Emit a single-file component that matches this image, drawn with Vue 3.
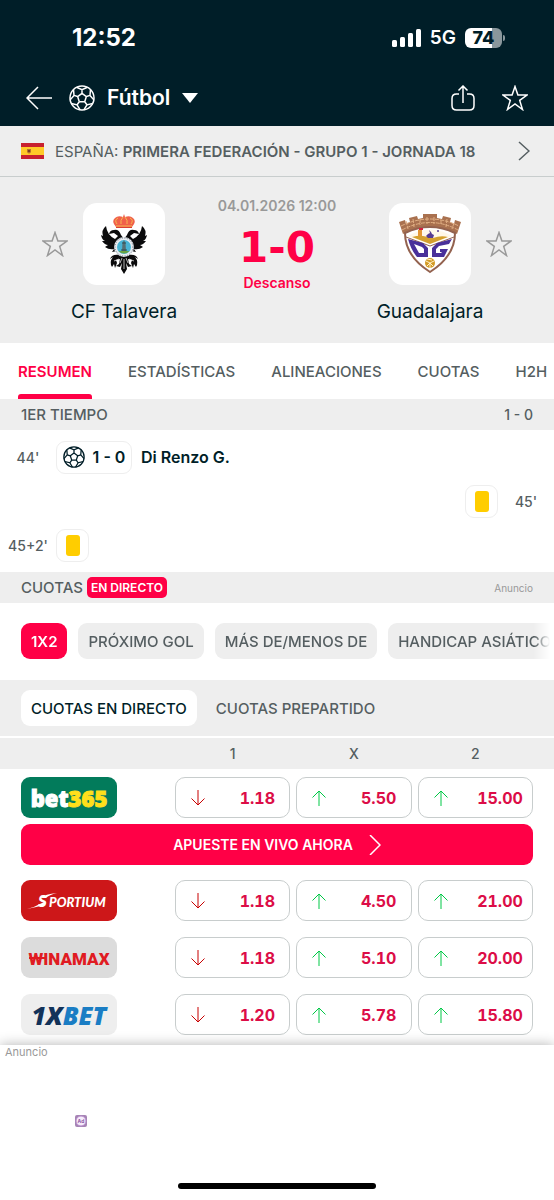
<script setup>
import { ref } from 'vue';

const tabs = ['RESUMEN', 'ESTADÍSTICAS', 'ALINEACIONES', 'CUOTAS', 'H2H'];
const activeTab = ref('RESUMEN');

const markets = ['1X2', 'PRÓXIMO GOL', 'MÁS DE/MENOS DE', 'HANDICAP ASIÁTICO'];
const activeMarket = ref('1X2');

const oddsTypes = ['CUOTAS EN DIRECTO', 'CUOTAS PREPARTIDO'];
const activeOddsType = ref('CUOTAS EN DIRECTO');

const bookmakers = [
  { id: 'bet365', odds: ['1.18', '5.50', '15.00'], cta: true },
  { id: 'sportium', odds: ['1.18', '4.50', '21.00'] },
  { id: 'winamax', odds: ['1.18', '5.10', '20.00'] },
  { id: '1xbet', odds: ['1.20', '5.78', '15.80'] },
];

// Builds the seams of the football: central pentagon, spokes and outer patches
const polar = (r, deg) => {
  const a = (deg * Math.PI) / 180;
  return `${(13 + r * Math.cos(a)).toFixed(2)} ${(13 + r * Math.sin(a)).toFixed(2)}`;
};
const ballPath = [0, 1, 2, 3, 4].map((k) => {
  const a = -90 + k * 72;
  return `M${polar(4.6, a)}L${polar(4.6, a + 72)}`
    + `M${polar(4.6, a)}L${polar(8.4, a)}`
    + `M${polar(12, a - 27)}L${polar(8.4, a)}L${polar(12, a + 27)}`;
}).join('');
</script>

<template>
  <div class="page">
    <header class="top">
      <div class="status">
        <span class="clock">12:52</span>
        <div class="status-right">
          <svg class="signal" viewBox="0 0 29 18" aria-hidden="true">
            <rect x="0" y="11" width="5" height="7" rx="1.5" />
            <rect x="8" y="8" width="5" height="10" rx="1.5" />
            <rect x="16" y="4" width="5" height="14" rx="1.5" />
            <rect x="24" y="0" width="5" height="18" rx="1.5" />
          </svg>
          <span class="network">5G</span>
          <span class="battery"><span class="battery-level">74</span></span>
        </div>
      </div>
      <div class="toolbar">
        <button class="icon-btn" aria-label="Volver">
          <svg width="26" height="24" viewBox="0 0 26 24" class="line"><path d="M26 12H1M12 1L1 12L12 23" /></svg>
        </button>
        <button class="sport">
          <svg width="26" height="26" viewBox="0 0 26 26" class="line"><circle cx="13" cy="13" r="12" /><path :d="ballPath" /></svg>
          <span>Fútbol</span>
          <svg width="16" height="10" viewBox="0 0 16 10"><path d="M0 0H16L8 10Z" fill="currentColor" /></svg>
        </button>
        <div class="actions">
          <button class="icon-btn" aria-label="Compartir">
            <svg width="24" height="26" viewBox="0 0 24 26" class="line"><path d="M8 9H5.500Q1 9 1 13.500V20.500Q1 25 5.500 25H18.500Q23 25 23 20.500V13.500Q23 9 18.500 9H16M12 18V1M7.500 5.500L12 1L16.500 5.500" /></svg>
          </button>
          <button class="icon-btn" aria-label="Favorito">
            <svg width="26" height="26" viewBox="0 0 26 26" class="line"><path d="M13 1.500L15.900 9.900L25 10L17.700 15.400L20.500 24.500L13 19L5.500 24.500L8.300 15.400L1 10L10.100 9.900Z" /></svg>
          </button>
        </div>
      </div>
    </header>

    <a class="league" href="#">
      <svg class="flag" width="23" height="16" viewBox="0 0 23 16" aria-hidden="true">
        <rect width="23" height="16" fill="#c8202f" />
        <rect y="4" width="23" height="8" fill="#ffc928" />
        <path d="M6 6H10V9Q8 12 6 9Z" fill="#b5722b" /><path d="M7 7H9V9H7Z" fill="#7a3b20" />
      </svg>
      <span class="league-name">ESPAÑA: <b>PRIMERA FEDERACIÓN - GRUPO 1 - JORNADA 18</b></span>
      <svg class="line" width="12" height="20" viewBox="0 0 12 20"><path d="M1 1L11 10L1 19" /></svg>
    </a>

    <section class="match">
      <div class="team">
        <div class="team-top">
          <button class="icon-btn fav" aria-label="Seguir a CF Talavera">
            <svg width="26" height="26" viewBox="0 0 26 26" class="line"><path d="M13 1.500L15.900 9.900L25 10L17.700 15.400L20.500 24.500L13 19L5.500 24.500L8.300 15.400L1 10L10.100 9.900Z" /></svg>
          </button>
          <div class="crest">
            <svg width="48" height="60" viewBox="0 0 48 60">
              <g fill="#0b0b0c">
                <path d="M6 12Q1 16 3 22L1 21Q2 26 5 27L2 27Q5 31 8 31L5 33Q9 36 14 35L12 38L17 37L18 42H30L31 37L36 38L34 35Q39 36 43 33L40 31Q43 31 46 27L43 27Q46 26 47 21L45 22Q47 16 42 12Q41 21 33 25L30 22L34 19L39 20Q38 16 34 16Q29 15 27 21L24 25L21 21Q19 15 14 16Q10 16 9 20L14 19L18 22L15 25Q7 21 6 12Z" />
                <path d="M19 41Q12 40 10 45L13 43Q9 48 12 53L14 50L15 54L17 49L16 46L20 45L19 50L16 52L20 53L22 49L21 55L24 60L27 55L26 49L28 53L32 52L29 50L28 45L32 46L31 49L33 54L34 50L36 53Q39 48 35 43L38 45Q36 40 29 41Z" />
              </g>
              <path d="M19 45L14 47M29 45L34 47M22 44L20 49M26 44L28 49M24 45V55" stroke="#fff" stroke-width="0.700" />
              <circle cx="24" cy="33" r="10" fill="#e9edf2" />
              <circle cx="24" cy="33" r="9" fill="none" stroke="#66707a" stroke-width="1" stroke-dasharray="1 1.500" />
              <circle cx="24" cy="33" r="7" fill="#48b4d4" />
              <path d="M18.500 37H29.500Q24 42 18.500 37Z" fill="#69a443" />
              <path d="M22 37L22.500 29L24 26L25.500 29L26 37Z" fill="#566f72" />
              <path d="M22 29H26M21 36H27" stroke="#2a4f56" />
              <path d="M16 13Q11 7 15 4Q18 1 23 3L24 0L25 3Q30 1 33 4Q37 7 32 13Z" fill="#f0604a" />
              <path d="M16 12H32M17 10Q14 6 18 4M31 10Q34 6 30 4M21 10Q20 6 23 3M27 10Q28 6 25 3" fill="none" stroke="#f6b74f" />
              <path d="M16 13.500H32" stroke="#d93e32" />
            </svg>
          </div>
        </div>
        <a class="team-name" href="#">CF Talavera</a>
      </div>

      <div class="result">
        <span class="date">04.01.2026 12:00</span>
        <strong class="score">1-0</strong>
        <span class="stage">Descanso</span>
      </div>

      <div class="team away">
        <div class="team-top">
          <div class="crest">
            <svg width="62" height="60" viewBox="0 0 62 60">
              <path d="M0 8L6 6L7 10L11 8L10 4L18 2L19 5L24 4V0H38V4L43 5L44 2L52 4L51 8L55 10L56 6L62 8L58 20Q31 6 4 20Z" fill="#a9714f" />
              <path d="M2 12Q31 -2 60 12M3 16Q31 1 59 16M7 7L9 15M14 5L15 13M21 5V11M28 3V10M35 3V10M42 6V11M48 5L47 13M55 9L53 15" fill="none" stroke="#e0ae83" stroke-width="1" stroke-dasharray="4 1" />
              <path d="M6 19Q31 7 56 19Q56 42 31 58Q6 42 6 19Z" fill="#fff" stroke="#93624f" stroke-width="2" />
              <path d="M9 22Q31 9 53 22L31 30Z" fill="#fff8e9" />
              <path d="M13 23Q20 21 24 22L34 24Q42 21 49 23L31 30Z" fill="#d5a02e" />
              <path d="M19 22V16H23V22Z" fill="#e49635" /><path d="M20 14H24V16H20Z" fill="#d3233c" />
              <path d="M27 22L29 20L31 19L30 16L32 18L33 20L35 21L34 24H29Z" fill="#563b91" />
              <circle cx="39" cy="17" r="1" fill="#563b91" />
              <path d="M7 23L31 32L55 23" fill="none" stroke="#93624f" />
              <path d="M9 25L24 29L29 34V43H18Q12 36 9 25ZM15 30L20 39H25V35L23 33Z" fill="#49309a" fill-rule="evenodd" />
              <path d="M53 25L38 29L33 34V43H45L49 35H41V38H43L42 39H37V35L40 32L50 30Z" fill="#49309a" />
              <circle cx="31" cy="49" r="5" fill="#d39b27" />
              <path d="M27 47L31 49L35 47M31 49V54M28 45L33 46M28 52L31 49L34 52" fill="none" stroke="#fff1c8" stroke-width="1" />
            </svg>
          </div>
          <button class="icon-btn fav" aria-label="Seguir a Guadalajara">
            <svg width="26" height="26" viewBox="0 0 26 26" class="line"><path d="M13 1.500L15.900 9.900L25 10L17.700 15.400L20.500 24.500L13 19L5.500 24.500L8.300 15.400L1 10L10.100 9.900Z" /></svg>
          </button>
        </div>
        <a class="team-name" href="#">Guadalajara</a>
      </div>
    </section>

    <nav class="tabs">
      <button
        v-for="tab in tabs"
        :key="tab"
        class="tab"
        :class="{ active: tab === activeTab }"
        @click="activeTab = tab"
      >{{ tab }}</button>
    </nav>

    <section>
      <h2 class="section-head"><span>1ER TIEMPO</span><span class="partial">1 - 0</span></h2>
      <ul class="events">
        <li class="event">
          <span class="minute">44'</span>
          <span class="incident goal">
            <svg width="22" height="22" viewBox="0 0 26 26" class="line"><circle cx="13" cy="13" r="12" /><path :d="ballPath" /></svg>
            <b>1 - 0</b>
          </span>
          <a class="player" href="#">Di Renzo G.</a>
        </li>
        <li class="event right">
          <span class="minute">45'</span>
          <span class="incident"><i class="card"></i></span>
        </li>
        <li class="event">
          <span class="minute">45+2'</span>
          <span class="incident"><i class="card"></i></span>
        </li>
      </ul>
    </section>

    <section>
      <h2 class="section-head">
        <span class="odds-title">CUOTAS <span class="live">EN DIRECTO</span></span>
        <small>Anuncio</small>
      </h2>
      <div class="markets">
        <button
          v-for="market in markets"
          :key="market"
          class="chip"
          :class="{ active: market === activeMarket }"
          @click="activeMarket = market"
        >{{ market }}</button>
      </div>
      <div class="odds-types">
        <button
          v-for="type in oddsTypes"
          :key="type"
          class="type"
          :class="{ active: type === activeOddsType }"
          @click="activeOddsType = type"
        >{{ type }}</button>
      </div>

      <table class="odds">
        <thead>
          <tr><td></td><th scope="col">1</th><th scope="col">X</th><th scope="col">2</th></tr>
        </thead>
        <tbody>
          <template v-for="book in bookmakers" :key="book.id">
            <tr>
              <td>
                <a class="logo" :class="'logo-' + book.id" href="#">
                  <span v-if="book.id === 'bet365'">bet<em>365</em></span>
                  <svg v-else-if="book.id === 'sportium'" width="96" height="40" viewBox="0 0 96 40">
                    <path d="M6 28Q14 26 21 22L24 21L23 24Q16 26 6 28ZM20 17Q24 13 36 12Q28 14 25 17Z" fill="#fff" />
                    <text x="17" y="26" class="sportium-s">S</text>
                    <text x="28" y="26" class="sportium-text">PORTIUM</text>
                  </svg>
                  <svg v-else-if="book.id === 'winamax'" width="96" height="40" viewBox="0 0 96 40">
                    <text x="48" y="27" text-anchor="middle" class="winamax-text">WINAMAX</text>
                    <path d="M8 20H25" stroke="#e01b22" stroke-width="2" />
                  </svg>
                  <span v-else><em>1X</em>BET</span>
                </a>
              </td>
              <td v-for="(odd, i) in book.odds" :key="i">
                <button class="odd">
                  <svg v-if="i === 0" class="line down" width="14" height="16" viewBox="0 0 14 16"><path d="M7 0V15M0.500 8.500L7 15L13.500 8.500" /></svg>
                  <svg v-else class="line up" width="14" height="16" viewBox="0 0 14 16"><path d="M7 16V1M0.500 7.500L7 1L13.500 7.500" /></svg>
                  <span>{{ odd }}</span>
                </button>
              </td>
            </tr>
            <tr v-if="book.cta" class="cta-row">
              <td colspan="4">
                <button class="cta">
                  APUESTE EN VIVO AHORA
                  <svg class="line" width="12" height="20" viewBox="0 0 12 20"><path d="M1 0L11 10L1 20" /></svg>
                </button>
              </td>
            </tr>
          </template>
        </tbody>
      </table>
    </section>

    <aside class="ad">
      <span class="ad-label">Anuncio</span>
      <svg class="ad-mark" width="14" height="14" viewBox="0 0 14 14">
        <rect x="1" y="1" width="12" height="12" rx="2" fill="#a584b4" />
        <circle cx="7" cy="7" r="5" fill="#f6ecfb" stroke="#b78bca" />
        <text x="7" y="9" text-anchor="middle" class="ad-text">Ad</text>
      </svg>
      <div class="home-bar"></div>
    </aside>
  </div>
</template>

<style>
body {
  margin: 0;
  background: #fff;
}
</style>

<style scoped>
.page {
  display: flex;
  flex-direction: column;
  min-height: 100vh;
  overflow: hidden;
  font-family: Inter, Roboto, sans-serif;
  font-size: 14px;
  color: #001e28;
}

.page * {
  box-sizing: border-box;
}

button {
  padding: 0;
  border: none;
  background: none;
  font: inherit;
  color: inherit;
  white-space: nowrap;
  cursor: pointer;
}

a {
  color: inherit;
  text-decoration: none;
}

svg {
  display: block;
  flex: none;
}

.line {
  fill: none;
  stroke: currentColor;
  stroke-width: 1.5;
}

/* Header */
.top {
  height: 126px;
  padding: 0 26px;
  background: #001e28;
  color: #fff;
}

.status {
  display: flex;
  align-items: center;
  justify-content: space-between;
  height: 75px;
  padding: 0 23px 0 46px;
}

.clock {
  font-size: 24px;
  font-weight: 700;
}

.status-right {
  display: flex;
  align-items: center;
  gap: 9px;
}

.signal {
  width: 29px;
  height: 18px;
  fill: #fff;
}

.network {
  font-size: 19px;
  font-weight: 600;
}

.battery {
  position: relative;
  width: 37px;
  height: 20px;
  margin-right: 3px;
  border-radius: 6px;
  background: linear-gradient(to right, #fff 74%, #8a979c 74%);
  text-align: center;
}

.battery::after {
  content: '';
  position: absolute;
  right: -3px;
  top: 7px;
  width: 2px;
  height: 6px;
  border-radius: 0 2px 2px 0;
  background: #8a979c;
}

.battery-level {
  display: block;
  font-size: 18px;
  line-height: 20px;
  font-weight: 800;
  color: #001e28;
}

.toolbar {
  display: flex;
  align-items: center;
  height: 45px;
}

.sport {
  display: flex;
  align-items: center;
  gap: 12px;
  margin-left: 17px;
  font-size: 21px;
  font-weight: 600;
}

.actions {
  display: flex;
  gap: 27px;
  margin-left: auto;
}

/* League */
.league {
  display: flex;
  align-items: center;
  gap: 11px;
  height: 51px;
  padding: 0 24px 0 21px;
  border-bottom: 1px solid #c8cdcd;
  background: #eee;
  color: #555e61;
}

.league-name {
  flex: 1;
  font-size: 15px;
  white-space: nowrap;
}

.league-name b {
  font-weight: 600;
}

/* Match */
.match {
  display: flex;
  justify-content: space-between;
  height: 166px;
  padding: 26px 42px 0;
  background: #eee;
}

.team {
  display: flex;
  flex-direction: column;
  gap: 14px;
}

.team-top {
  display: flex;
  align-items: center;
  gap: 15px;
}

.fav {
  color: #999;
}

.crest {
  display: flex;
  align-items: center;
  justify-content: center;
  width: 82px;
  height: 82px;
  border-radius: 14px;
  background: #fff;
}

.team-name {
  align-self: flex-end;
  width: 164px;
  margin-right: -41px;
  text-align: center;
  font-size: 19px;
  line-height: 26px;
}

.away .team-name {
  align-self: flex-start;
  margin-right: 0;
  margin-left: -41px;
}

.result {
  display: flex;
  flex-direction: column;
  align-items: center;
  margin-top: -7px;
}

.date {
  font-size: 14px;
  line-height: 20px;
  font-weight: 600;
  color: #999;
}

.score {
  margin: 7px 0 0;
  font-family: 'DejaVu Sans', sans-serif;
  font-size: 42px;
  line-height: 50px;
  font-weight: 700;
  color: #ff0046;
}

.stage {
  font-size: 14px;
  line-height: 20px;
  font-weight: 600;
  color: #ff0046;
}

/* Tabs */
.tabs {
  display: flex;
  gap: 36px;
  height: 56px;
  padding-left: 18px;
  overflow: hidden;
}

.tab {
  position: relative;
  font-size: 15px;
  font-weight: 500;
  color: #555e61;
}

.tab.active {
  font-weight: 600;
  color: #ff0046;
}

.tab.active::after {
  content: '';
  position: absolute;
  right: 0;
  bottom: 0;
  left: 0;
  height: 5px;
  border-radius: 3px 3px 0 0;
  background: #ff0046;
}

.section-head {
  display: flex;
  align-items: center;
  justify-content: space-between;
  height: 31px;
  margin: 0;
  padding: 0 21px;
  background: #eee;
  font-size: 15px;
  font-weight: 500;
  color: #555e61;
}

.section-head .partial {
  font-size: 14px;
}

.section-head small {
  font-size: 10px;
  font-weight: 400;
  color: #999;
}

/* Events */
.events {
  margin: 0;
  padding: 5px 0;
  list-style: none;
}

.event {
  display: flex;
  align-items: center;
  height: 44px;
}

.event.right {
  flex-direction: row-reverse;
}

.minute {
  width: 56px;
  text-align: center;
  font-weight: 500;
  color: #555e61;
}

.incident {
  display: flex;
  align-items: center;
  justify-content: center;
  gap: 8px;
  width: 33px;
  height: 33px;
  border: 1px solid #eee;
  border-radius: 9px;
}

.incident.goal {
  width: 76px;
  font-size: 16px;
}

.incident b,
.player {
  font-weight: 600;
}

.player {
  margin-left: 9px;
  font-size: 16px;
}

.card {
  width: 14px;
  height: 21px;
  border-radius: 3px;
  background: #ffcd00;
}

/* Odds */
.odds-title {
  display: flex;
  align-items: center;
  gap: 4px;
}

.live {
  padding: 0 4px;
  border-radius: 5px;
  background: #ff0046;
  font-size: 12px;
  line-height: 21px;
  font-weight: 600;
  color: #fff;
}

.markets {
  display: flex;
  gap: 11px;
  padding: 20px 0 21px 21px;
  overflow: hidden;
  mask-image: linear-gradient(to left, transparent 4px, #000 20px);
}

.chip,
.type {
  flex: none;
  height: 36px;
  padding: 0 10px;
  border-radius: 9px;
  font-size: 15px;
  font-weight: 500;
  color: #555e61;
}

.chip {
  background: #eee;
}

.chip.active {
  background: #ff0046;
  font-weight: 600;
  color: #fff;
}

.odds-types {
  display: flex;
  gap: 9px;
  padding: 10px 21px;
  border-bottom: 2px solid #fff;
  background: #eee;
}

.type.active {
  background: #fff;
  color: #001e28;
}

.odds,
.odds thead,
.odds tbody {
  display: block;
}

.odds tr {
  display: grid;
  grid-template-columns: 148px 1fr 1fr 1fr;
  column-gap: 6px;
  padding: 0 21px;
}

.odds th,
.odds td {
  padding: 0;
}

.odds thead tr {
  background: #eee;
  line-height: 31px;
}

.odds th {
  font-size: 14px;
  font-weight: 500;
  color: #555e61;
}

.odds tbody tr {
  padding-top: 8px;
  padding-bottom: 8px;
}

.odds tbody .cta-row {
  display: block;
  margin-top: -2px;
  padding-top: 0;
  padding-bottom: 7px;
}

.cta-row td {
  display: block;
}

.odd {
  display: flex;
  align-items: center;
  justify-content: space-between;
  width: 100%;
  height: 41px;
  padding: 0 8px 0 15px;
  border: 1px solid #c8cdcd;
  border-radius: 10px;
  font-size: 16px;
  font-weight: 700;
  font-variant-numeric: tabular-nums;
}

.odd span {
  width: 48px;
  text-align: center;
  color: #dc0d47;
}

.odd .line {
  stroke-width: 1;
}

.down {
  color: #c80000;
}

.up {
  color: #00c846;
}

.cta {
  display: flex;
  align-items: center;
  justify-content: center;
  gap: 16px;
  width: 100%;
  height: 41px;
  border-radius: 9px;
  background: #ff0046;
  font-size: 14px;
  font-weight: 600;
  color: #fff;
}

.logo {
  display: flex;
  align-items: center;
  justify-content: center;
  width: 96px;
  height: 41px;
  border-radius: 9px;
  overflow: hidden;
}

.logo em {
  font-style: inherit;
}

.logo-bet365 {
  background: #027b5b;
  font-family: 'Open Sans', sans-serif;
  font-size: 22px;
  font-weight: 800;
  color: #fff;
  -webkit-text-stroke: 1px;
}

.logo-bet365 em {
  color: #ffdf1b;
  -webkit-text-stroke: 1px #ffdf1b;
}

.logo-sportium {
  background: #cd1719;
}

.sportium-s,
.sportium-text {
  font-family: Lato, sans-serif;
  font-weight: 900;
  font-style: italic;
  font-size: 13px;
  fill: #fff;
}

.sportium-s {
  font-size: 17px;
}

.logo-winamax {
  background: #dcdcdc;
}

.winamax-text {
  font-family: Roboto, sans-serif;
  font-weight: 900;
  font-size: 17px;
  fill: #e01b22;
}

.logo-1xbet {
  background: #eee;
  font-family: 'Open Sans', sans-serif;
  font-size: 25px;
  font-style: italic;
  font-weight: 800;
  color: #1a7dc4;
}

.logo-1xbet em {
  color: #123259;
}

/* Ad */
.ad {
  position: relative;
  display: flex;
  flex: 1;
  flex-direction: column;
  min-height: 150px;
  margin-top: 2px;
  padding: 0 5px 11px;
  background: #fff;
  box-shadow: 0 0 12px rgba(0, 0, 0, 0.3);
}

.ad-label {
  font-size: 11px;
  line-height: 14px;
  color: #999;
}

.ad-mark {
  margin: 55px 0 0 69px;
}

.ad-text {
  font-size: 5px;
  font-weight: 700;
  fill: #8d5aa5;
}

.home-bar {
  width: 198px;
  height: 6px;
  margin: auto auto 0;
  border-radius: 3px;
  background: #000;
}
</style>
